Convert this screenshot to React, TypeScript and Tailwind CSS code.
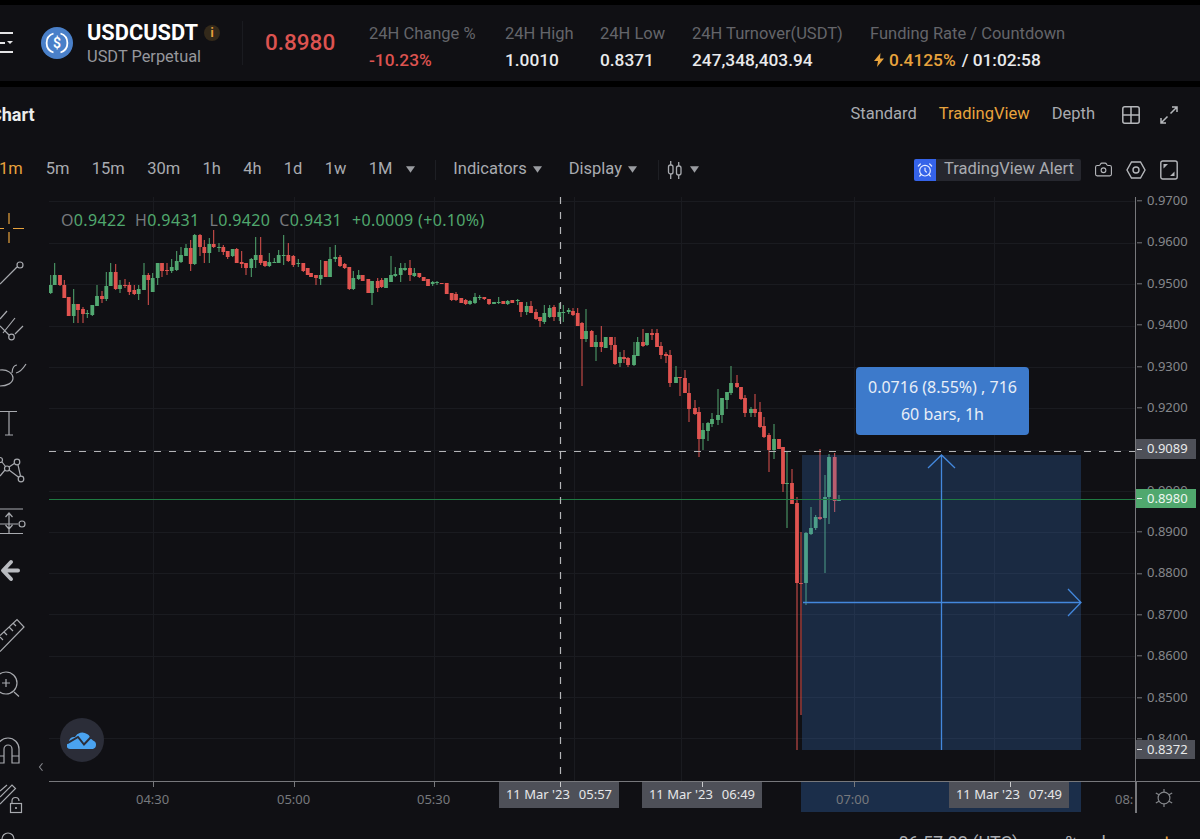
import { AlarmClock, Camera } from "lucide-react";
import type { ReactNode } from "react";

const plex = "font-['Roboto','Noto_Sans',sans-serif]";
const chartFont = "font-['Noto_Sans','Roboto',sans-serif]";

// [x, bodyTop, bodyBottom, wickTop, wickBottom, up] in page pixels
const candles: number[][] = [
  [50.7, 285, 293, 275, 294, 1], [54.7, 275, 285, 263, 285, 1], [60, 275, 285, 275, 286, 0], [64.3, 285, 298, 280, 298, 0],
  [68.7, 297, 316, 297, 316, 0], [73.7, 304, 316, 289, 323, 1], [78, 304, 310, 304, 323, 0], [83, 309, 314, 307, 323, 0],
  [87.3, 313, 314, 310, 318, 1], [92.3, 305, 315, 305, 316, 1], [97, 296, 306, 285, 306, 1], [102, 296, 299, 291, 303, 0],
  [106.3, 286, 299, 272, 301, 1], [110.7, 272, 286, 263, 286, 1], [115.7, 272, 289, 264, 290, 0], [120, 285, 289, 280, 293, 1],
  [125, 285, 286, 279, 288, 0], [129.3, 285, 292, 282, 295, 0], [134.3, 290, 294, 285, 295, 0], [138.7, 289, 294, 285, 300, 1],
  [144, 275, 290, 263, 290, 1], [148.3, 275, 280, 273, 305, 0], [152.7, 278, 292, 273, 292, 1], [157.7, 263, 278, 263, 285, 1],
  [162, 263, 271, 263, 277, 0], [167, 270, 271, 263, 275, 0], [171.7, 267, 271, 259, 273, 1], [176.7, 261, 270, 251, 271, 1],
  [181, 255, 262, 247, 263, 1], [186, 248, 256, 244, 256, 1], [190.7, 248, 264, 240, 271, 0], [194.7, 235, 264, 234, 265, 1],
  [200, 235, 247, 234, 256, 0], [204.3, 247, 253, 240, 263, 0], [209.3, 244, 253, 238, 263, 1], [213.7, 244, 247, 230, 248, 0],
  [219, 247, 248, 243, 252, 1], [223.3, 247, 252, 245, 255, 0], [227.7, 251, 257, 251, 259, 0], [232.7, 249, 256, 249, 257, 1],
  [236.7, 249, 263, 248, 263, 0], [241.7, 262, 264, 251, 268, 0], [246, 263, 268, 263, 275, 0], [251.3, 259, 268, 258, 277, 1],
  [255.7, 255, 260, 237, 268, 1], [260.7, 255, 263, 237, 265, 0], [265, 261, 266, 261, 267, 0], [269.3, 262, 266, 253, 267, 1],
  [274.3, 262, 263, 258, 263, 1], [278.7, 255, 263, 250, 263, 1], [283.7, 255, 256, 235, 265, 1], [288.3, 255, 261, 243, 262, 0],
  [293.3, 256, 265, 255, 267, 0], [298.3, 263, 264, 259, 267, 1], [303.3, 263, 271, 263, 272, 0], [307.7, 268, 275, 268, 275, 0],
  [311, 273, 277, 273, 277, 0], [316, 275, 278, 275, 285, 0], [320.7, 275, 279, 260, 285, 1], [325.7, 261, 277, 261, 277, 0],
  [330, 259, 277, 247, 277, 1], [335.3, 257, 259, 245, 262, 1], [340, 257, 266, 255, 267, 0], [344.7, 264, 268, 263, 269, 0],
  [349.3, 267, 289, 267, 290, 0], [353.3, 278, 289, 271, 290, 1], [358.7, 275, 279, 270, 280, 1], [362.7, 275, 281, 275, 281, 0],
  [368.3, 279, 293, 279, 293, 0], [372, 281, 293, 281, 305, 1], [377.7, 281, 288, 278, 292, 0], [381.7, 280, 287, 278, 288, 0],
  [386, 278, 288, 278, 288, 1], [391, 275, 282, 256, 282, 1], [395.3, 274, 276, 267, 277, 1], [400.7, 268, 275, 263, 282, 1],
  [405, 268, 270, 263, 271, 1], [410, 268, 275, 260, 281, 0], [414.3, 273, 276, 268, 277, 1], [419.3, 273, 277, 273, 278, 0],
  [423.7, 277, 281, 277, 281, 0], [428, 279, 286, 279, 286, 0], [432.7, 282, 284, 281, 286, 1], [437, 282, 283, 281, 285, 1],
  [441.7, 283, 284, 283, 284, 0], [446.7, 283, 294, 283, 294, 0], [451.7, 293, 300, 293, 301, 0], [456, 294, 300, 292, 301, 0],
  [461.3, 298, 303, 298, 303, 0], [465.7, 300, 304, 299, 305, 0], [470, 301, 304, 300, 305, 1], [475, 297, 303, 293, 304, 1],
  [479.7, 297, 298, 295, 300, 1], [484.3, 297, 299, 297, 300, 0], [489, 299, 304, 299, 305, 0], [494, 302, 304, 302, 304, 1],
  [498.7, 302, 303, 297, 304, 1], [503.3, 301, 304, 301, 304, 0], [507.7, 301, 304, 300, 305, 1], [512.3, 300, 303, 300, 303, 0],
  [517.7, 300, 301, 299, 305, 1], [521, 302, 312, 302, 317, 0], [526.7, 306, 312, 302, 315, 1], [531, 306, 313, 301, 313, 0],
  [536, 312, 319, 309, 320, 0], [540, 317, 321, 317, 327, 0], [544.3, 313, 322, 305, 324, 1], [549.7, 308, 317, 305, 318, 1],
  [554, 307, 317, 305, 321, 0], [559.3, 312, 317, 303, 321, 1], [563.3, 312, 313, 305, 322, 1], [568.7, 310, 312, 308, 314, 1],
  [573, 311, 315, 308, 316, 0], [577.7, 313, 326, 308, 326, 0], [582, 323, 339, 322, 386, 0], [586, 331, 339, 309, 342, 1],
  [591.7, 331, 347, 330, 347, 0], [596, 342, 347, 335, 361, 1], [601.3, 342, 347, 326, 352, 0], [605.7, 337, 348, 337, 348, 1],
  [611, 337, 345, 337, 350, 0], [615, 345, 364, 337, 365, 0], [620, 357, 363, 352, 367, 1], [624, 357, 359, 350, 363, 0],
  [628, 358, 365, 357, 367, 0], [634, 355, 365, 342, 366, 1], [637.7, 342, 356, 337, 356, 1], [643, 342, 346, 329, 347, 0],
  [647, 333, 345, 333, 346, 1], [652, 333, 335, 329, 340, 0], [657, 333, 347, 329, 347, 0], [661, 346, 355, 342, 359, 0],
  [666, 354, 356, 352, 363, 0], [670, 355, 383, 350, 387, 0], [676, 377, 383, 366, 383, 1], [680, 377, 378, 377, 396, 0],
  [685, 378, 393, 370, 393, 0], [689, 393, 409, 383, 422, 0], [695, 408, 414, 400, 415, 0], [699, 412, 439, 407, 457, 0],
  [703, 430, 439, 423, 450, 1], [708, 423, 431, 422, 441, 1], [712, 419, 424, 413, 427, 1], [718, 415, 420, 389, 425, 1],
  [722, 398, 415, 398, 423, 1], [727, 392, 400, 392, 409, 1], [731, 383, 393, 366, 395, 1], [737, 383, 387, 375, 388, 0],
  [741, 387, 399, 387, 400, 0], [745, 398, 413, 395, 417, 0], [751, 409, 413, 407, 417, 1], [755, 409, 413, 394, 417, 0],
  [760, 412, 427, 402, 428, 0], [764, 426, 437, 417, 438, 0], [769, 435, 450, 433, 472, 0], [774, 439, 450, 424, 459, 1],
  [779, 439, 449, 439, 449, 0], [783, 447, 484, 447, 492, 0], [787, 483, 484, 452, 528, 1], [792, 483, 504, 469, 504, 0],
  [797, 503, 583, 497, 750, 0], [801, 583, 584, 532, 715, 0], [806, 533, 583, 532, 605, 1], [811, 528, 534, 507, 535, 1],
  [815.7, 517, 528, 515, 530, 1], [820, 517, 519, 449, 520, 0], [825, 497, 518, 475, 573, 1], [829, 457, 497, 454, 524, 1],
  [834.7, 457, 501, 453, 512, 0], [839, 499, 501, 495, 501, 1],
];

const gridY = [201, 243, 284, 326, 367, 408, 450, 491, 532, 573, 614, 656, 697, 738];
const gridX = [153.5, 294.5, 434.5, 574.5, 681.5, 854.5, 994.5];
const priceLabels = ["0.9700", "0.9600", "0.9500", "0.9400", "0.9300", "0.9200", "0.9100", "0.9000", "0.8900", "0.8800", "0.8700", "0.8600", "0.8500", "0.8400"];

function ChartCanvas() {
  return (
    <svg viewBox="49 197 1086 584" className="block w-[1086px] h-[584px]">
      {gridY.map((y) => (
        <line key={y} x1={49} x2={1135} y1={y + 0.5} y2={y + 0.5} stroke="#1a1b20" />
      ))}
      {gridX.map((x) => (
        <line key={x} x1={x} x2={x} y1={197} y2={781} stroke="#1a1b20" />
      ))}
      {candles.map(([x, t, b, wt, wb, up]) => {
        const c = up ? "#52a871" : "#e0534f";
        return (
          <g key={x}>
            <line x1={x} x2={x} y1={wt} y2={wb} stroke={c} strokeWidth={1} />
            <rect x={x - 1.9} y={t} width={3.8} height={Math.max(b - t, 1)} fill={c} />
          </g>
        );
      })}
      <rect x={802} y={455} width={279} height={295} fill="#3c82dc" fillOpacity={0.23} />
      <line x1={49} x2={1135} y1={499.5} y2={499.5} stroke="#1f7a42" strokeWidth={1} />
      <line x1={49} x2={1135} y1={451.5} y2={451.5} stroke="#b4b5b8" strokeWidth={1.2} strokeDasharray="7 8" />
      <line x1={560.5} x2={560.5} y1={197} y2={781} stroke="#b4b5b8" strokeWidth={1.2} strokeDasharray="7 8" />
      <g stroke="#4388dd" strokeWidth={1.3} fill="none">
        <path d="M941.5 750V455M928 468l13.5-13 13.500 13" />
        <path d="M803 602.500H1081M1068 589l13 13.500-13 13.500" />
      </g>
    </svg>
  );
}

function Tool({ y, h, children }: { y: number; h: number; children: ReactNode }) {
  return (
    <svg viewBox={`0 ${y} 49 ${h}`} className="block w-[49px] shrink-0" style={{ height: h }} fill="none" stroke="#a8aaaf" strokeWidth={1.2}>
      {children}
    </svg>
  );
}

function LeftTools() {
  return (
    <div className="relative w-[49px] shrink-0 flex flex-col">
      <Tool y={197} h={53}>
        <path d="M9 213v11M9 232v11M0 228.500h4M13 228.500h11" stroke="#e8a33d" />
      </Tool>
      <Tool y={250} h={50}>
        <path d="M0 284l17-17" />
        <circle cx={20} cy={265} r={3} />
      </Tool>
      <Tool y={300} h={50}>
        <path d="M0 319l7-8M3 333l12-15M15 334l8-8M0 326l9 9" />
        <circle cx={11.500} cy={337} r={2.800} />
      </Tool>
      <Tool y={350} h={50}>
        <path d="M0 370C8 369 13 374 13 378C13 383 7 386 0 386M12 373C12 367 15 365 17 365M16 373Q21 372 26 364" />
      </Tool>
      <Tool y={400} h={46}>
        <path d="M0 411.500h17M9 411.500v23.500M5 435h8" />
      </Tool>
      <Tool y={446} h={50}>
        <circle cx={0} cy={460} r={2.500} />
        <circle cx={7} cy={468.500} r={2.500} />
        <circle cx={17} cy={462} r={2.800} />
        <circle cx={21} cy={479} r={2.800} />
        <path d="M2 462l3.500 4.500M9 470l10 7.500M9 467l6-4M18 465l2.500 11M0 476l5-6" />
      </Tool>
      <Tool y={496} h={50}>
        <path d="M0 509h23M0 533.500h23M9 513v21M5.500 517l3.500-4 3.500 4M5.500 525l3.500 4 3.500-4M0 524h18" />
        <circle cx={22} cy={524} r={3} />
      </Tool>
      <Tool y={546} h={50}>
        <path d="M18 570.500H4M11 562l-8 8.500 8 8.500" stroke="#b9bbc0" strokeWidth={4} strokeLinejoin="round" strokeLinecap="round" />
      </Tool>
      <Tool y={596} h={64}>
        <path d="M0 635.500L17 619.500l7 7.500L0 651.500M4 632l3 3M9 627l4 4M13 623l3 3M0 637l3 3" />
      </Tool>
      <Tool y={660} h={56}>
        <circle cx={6} cy={683} r={11} />
        <path d="M14 692l5 4.500M2 683h8M6 679v8" />
      </Tool>
      <Tool y={716} h={56}>
        <path d="M-3 763V749a11 11 0 0 1 22 0V763H12V749a4 4 0 0 0-8 0V763ZM-3 756H4M12 756H19" />
      </Tool>
      <Tool y={772} h={48}>
        <path d="M0 797L12 785l3.500 3.500L0 804M0 791L7 785" />
        <rect x={10.500} y={803.500} width={11} height={9} />
        <path d="M12 803v-2a3.500 3.500 0 0 1 7 0" />
        <circle cx={16} cy={808} r={0.500} />
      </Tool>
      <Tool y={820} h={19}>
        <circle cx={8} cy={839} r={6} />
      </Tool>
      <svg viewBox="0 0 8 12" className="absolute left-[38px] top-[565px] w-[6px] h-[10px]" fill="none" stroke="#85878c" strokeWidth={1.500}>
        <path d="M6 1L2 6l4 5" />
      </svg>
    </div>
  );
}

function Caret() {
  return (
    <svg viewBox="0 0 10 7" className="block w-[9px] h-[7px]" fill="#9a9ca1">
      <path d="M0 0h10L5 7z" />
    </svg>
  );
}

function Stat({ label, value, className }: { label: string; value: ReactNode; className: string }) {
  return (
    <div className={className}>
      <div className="text-[16.500px] leading-[22px] text-[#64656a] whitespace-nowrap">{label}</div>
      <div className="mt-[4px] text-[17.300px] leading-[22px] font-medium whitespace-nowrap text-[#e9eaec]">{value}</div>
    </div>
  );
}

function Header() {
  return (
    <div className={`${plex} mt-[5px] h-[76px] shrink-0 flex items-center bg-[#101014]`}>
      <div className="w-[41px] shrink-0 flex flex-col gap-[7px] -mt-[1px]">
        <span className="block w-[13px] h-[2px] bg-[#e4e4e6]" />
        <span className="flex w-[13px] items-center gap-[2px]">
          <span className="block w-[6px] h-[2px] bg-[#e4e4e6]" />
          <span className="block w-0 h-0 border-x-[3px] border-x-transparent border-t-[3px] border-t-[#e4e4e6]" />
        </span>
        <span className="block w-[13px] h-[2px] bg-[#e4e4e6]" />
      </div>
      <svg viewBox="0 0 32 32" className="block w-[32px] h-[32px] shrink-0">
        <circle cx={16} cy={16} r={16} fill="#4a80c9" />
        <path d="M12.500 6.500a10 10 0 0 0 0 19M19.500 6.500a10 10 0 0 1 0 19" fill="none" stroke="#fff" strokeWidth={1.800} />
        <text x={16} y={21} fontSize={14} fontWeight={600} fill="#fff" textAnchor="middle" fontFamily="Roboto">$</text>
      </svg>
      <div className="ml-[14px] w-[155px] shrink-0 pt-[2px]">
        <div className="flex items-center h-[26px]">
          <span className="text-[21.800px] font-bold text-white">USDCUSDT</span>
          <span className="ml-[6px] w-[16px] h-[16px] rounded-full bg-[#33291a] flex items-center justify-center text-[12px] font-bold text-[#e8a33d]">i</span>
        </div>
        <div className="text-[16.400px] leading-[22px] text-[#96979c] whitespace-nowrap">USDT Perpetual</div>
      </div>
      <div className="w-px h-[44px] bg-[#1a1b20] shrink-0" />
      <div className="ml-[22px] w-[104px] shrink-0 text-[22.500px] font-medium text-[#dc5350]">0.8980</div>
      <div className="flex pt-[8px]">
        <Stat className="w-[136px] shrink-0" label="24H Change %" value={<span className="text-[#dc5350]">-10.23%</span>} />
        <Stat className="w-[95px] shrink-0" label="24H High" value="1.0010" />
        <Stat className="w-[92px] shrink-0" label="24H Low" value="0.8371" />
        <Stat className="w-[178px] shrink-0" label="24H Turnover(USDT)" value="247,348,403.94" />
        <Stat
          className="shrink-0"
          label="Funding Rate / Countdown"
          value={
            <span className="flex items-center">
              <svg viewBox="0 0 10 14" className="ml-[4px] block w-[10px] h-[14px]" fill="#e8a33d">
                <path d="M6.500 0L0 8h4l-1 6 7-8.500H6z" />
              </svg>
              <span className="ml-[5px] text-[#e8a33d]">0.4125%</span>
              <span className="ml-[6px]">/ 01:02:58</span>
            </span>
          }
        />
      </div>
    </div>
  );
}

function TitleRow() {
  return (
    <div className={`${plex} h-[55px] shrink-0 flex items-center text-[#a9abb0] text-[16.500px]`}>
      <span className="-ml-[10px] text-[18px] font-bold text-[#eceded]">Chart</span>
      <span className="ml-auto">Standard</span>
      <span className="ml-[22px] text-[#e8a33d]">TradingView</span>
      <span className="ml-[22px]">Depth</span>
      <svg viewBox="0 0 18 18" className="ml-[27px] block w-[18px] h-[18px]" fill="none" stroke="#b5b7bb" strokeWidth={1.500}>
        <rect x={0.800} y={0.800} width={16.400} height={16.400} rx={2} />
        <path d="M9 1v16M1 9h16" />
      </svg>
      <svg viewBox="0 0 18 18" className="ml-[20px] mr-[22px] block w-[18px] h-[18px]" fill="none" stroke="#b5b7bb" strokeWidth={1.500}>
        <path d="M10.500 7.500L17 1M12 1h5v5M7.500 10.500L1 17M1 12v5h5" />
      </svg>
    </div>
  );
}

function ToolbarRow() {
  const times = ["5m", "15m", "30m", "1h", "4h", "1d", "1w", "1M"];
  return (
    <div className={`${plex} h-[55px] shrink-0 flex items-center text-[16.500px] text-[#a9abb0]`}>
      <span className="-ml-[1px] text-[#e8a33d]">1m</span>
      <div className="ml-[23px] flex items-center gap-[22.300px]">
        {times.map((t) => (
          <span key={t}>{t}</span>
        ))}
      </div>
      <span className="ml-[14px]">
        <Caret />
      </span>
      <span className="ml-[20px] w-px h-[20px] bg-[#1e1f24]" />
      <span className="ml-[17px]">Indicators</span>
      <span className="ml-[6px]">
        <Caret />
      </span>
      <span className="ml-[27px]">Display</span>
      <span className="ml-[6px]">
        <Caret />
      </span>
      <span className="ml-[21px] w-px h-[20px] bg-[#1e1f24]" />
      <svg viewBox="0 0 16 18" className="ml-[8px] block w-[16px] h-[18px]" fill="none" stroke="#a9abb0" strokeWidth={1.300}>
        <rect x={1.500} y={4} width={4.500} height={9} rx={2} />
        <rect x={9.500} y={5} width={4.500} height={9} rx={2} />
        <path d="M3.700 0v4M3.700 13v5M11.700 1v4M11.700 14v4" />
      </svg>
      <span className="ml-[7px]">
        <Caret />
      </span>
      <div className="ml-auto flex items-center h-[22px] w-[167px] rounded-[2px] bg-[#26272e] overflow-hidden">
        <span className="w-[22px] h-full bg-[#3563e9] flex items-center justify-center">
          <AlarmClock size={16} color="#e6ecff" strokeWidth={1.800} />
        </span>
        <span className="ml-[8px] text-[#a9abb0] whitespace-nowrap">TradingView Alert</span>
      </div>
      <span className="ml-[13px]">
        <Camera size={19} color="#b5b7bb" strokeWidth={1.400} />
      </span>
      <svg viewBox="0 0 20 18" className="ml-[13px] block w-[20px] h-[18px]" fill="none" stroke="#b5b7bb" strokeWidth={1.400}>
        <path d="M5.500 1h9L19 9l-4.500 8h-9L1 9z" />
        <circle cx={10} cy={9} r={3} />
      </svg>
      <svg viewBox="0 0 18 20" className="ml-[14px] mr-[22px] block w-[18px] h-[20px]" fill="none" stroke="#b5b7bb" strokeWidth={1.400}>
        <rect x={0.800} y={1} width={16.400} height={18} rx={2} />
        <path d="M3.500 4h4.500L3.500 8.500zM14.500 16H10l4.500-4.500z" fill="#b5b7bb" stroke="none" />
      </svg>
    </div>
  );
}

function PriceAxis() {
  return (
    <div className={`${chartFont} relative w-[65px] shrink-0 border-l-[1.500px] border-[#77787c] text-[13px] text-[#85878b]`}>
      <div>
        {priceLabels.map((p) => (
          <div key={p} className="flex items-center h-[41.400px] -translate-y-[16.700px]">
            <span className="w-[5px] h-px bg-[#77787c] ml-px" />
            <span className="ml-[5px]">{p}</span>
          </div>
        ))}
      </div>
      <div className="absolute left-0 right-[4px] top-[242px] h-[20px] bg-[#4e5058] flex items-center text-[#e8e9ea]">
        <span className="w-[5px] h-px bg-[#e8e9ea] ml-px" />
        <span className="ml-[5px]">0.9089</span>
      </div>
      <div className="absolute left-0 right-[4px] top-[292px] h-[19px] bg-[#50a86e] flex items-center text-[#eef6f0]">
        <span className="w-[5px] h-px bg-[#eef6f0] ml-px" />
        <span className="ml-[5px]">0.8980</span>
      </div>
      <div className="absolute left-0 right-[5px] top-[543px] h-[19px] bg-[#4e5058] flex items-center text-[#e8e9ea]">
        <span className="w-[5px] h-px bg-[#e8e9ea] ml-px" />
        <span className="ml-[5px]">0.8372</span>
      </div>
    </div>
  );
}

function TimeAxis() {
  const badge = "absolute top-0 h-[26px] w-[120px] bg-[#4e5058] flex items-center justify-center gap-[9px] text-[#e6e7e9] text-[13px]";
  const label = "absolute top-[8px] text-[13px] text-[#77797d]";
  const tick = "absolute top-0 w-px h-[5px]";
  return (
    <div className={`${chartFont} relative h-[31px] shrink-0 border-t-[1.500px] border-[#77787c]`}>
      <div className="absolute left-[752px] w-[280px] top-0 h-[30px] bg-[#1b2e4a]" />
      <span className={`${label} left-[87px]`}>04:30</span>
      <span className={`${label} left-[228px]`}>05:00</span>
      <span className={`${label} left-[368px]`}>05:30</span>
      <span className={`${label} left-[787px]`}>07:00</span>
      <span className={`${label} left-[1066px]`}>08:</span>
      <span className={`${tick} left-[104px] bg-[#77787c]`} />
      <span className={`${tick} left-[245px] bg-[#77787c]`} />
      <span className={`${tick} left-[385px] bg-[#77787c]`} />
      <span className={`${tick} left-[805px] bg-[#77787c]`} />
      <div className={`${badge} left-[450px]`}>
        <span>11 Mar '23</span>
        <span>05:57</span>
      </div>
      <div className={`${badge} left-[593px]`}>
        <span>11 Mar '23</span>
        <span>06:49</span>
      </div>
      <div className={`${badge} left-[900px]`}>
        <span>11 Mar '23</span>
        <span>07:49</span>
      </div>
      <span className={`${tick} left-[511px] bg-[#c9cacc]`} />
      <span className={`${tick} left-[653px] bg-[#c9cacc]`} />
      <span className={`${tick} left-[961px] bg-[#c9cacc]`} />
      <span className="absolute left-[1086px] top-0 w-[1.500px] h-[31px] bg-[#77787c]" />
      <svg viewBox="0 0 22 22" className="absolute left-[1105px] top-[6px] w-[20px] h-[20px]" fill="none" stroke="#85878b" strokeWidth={1.300}>
        <circle cx={11} cy={11} r={6.500} />
        <path d="M11 1v3.500M11 17.500V21M2 5.500l3.500 2M20 5.500l-3.500 2M2 16.500l3.500-2M20 16.500l-3.500-2" />
      </svg>
    </div>
  );
}

export default function App() {
  return (
    <div className="w-[1200px] h-[839px] overflow-hidden bg-black flex flex-col">
      <Header />
      <div className="mt-[6px] flex-1 min-h-0 flex flex-col bg-[#101014]">
        <TitleRow />
        <ToolbarRow />
        <div className="flex flex-1 min-h-0">
          <LeftTools />
          <div className="flex-1 min-w-0 flex flex-col">
            <div className="flex h-[584px] shrink-0">
              <div className="relative w-[1086px] shrink-0">
                <ChartCanvas />
                <div className={`${chartFont} absolute left-[12px] top-[12px] flex text-[16px] leading-[22px] tracking-[0.35px] text-[#50a86e] whitespace-nowrap`}>
                  <span><span className="text-[#77797d]">O</span>0.9422</span>
                  <span className="ml-[9px]"><span className="text-[#77797d]">H</span>0.9431</span>
                  <span className="ml-[10px]"><span className="text-[#77797d]">L</span>0.9420</span>
                  <span className="ml-[9px]"><span className="text-[#77797d]">C</span>0.9431</span>
                  <span className="ml-[10px]">+0.0009 (+0.10%)</span>
                </div>
                <div className={`${chartFont} absolute left-[807px] top-[170px] w-[173px] h-[68px] rounded-[4px] bg-[#3d7acb] flex flex-col items-center justify-center text-[16px] leading-[27px] text-[#e8eef7]`}>
                  <span>0.0716 (8.55%) , 716</span>
                  <span>60 bars, 1h</span>
                </div>
                <div className="absolute left-[11px] top-[521px] w-[44px] h-[44px] rounded-full bg-[#2b2d38] flex items-center justify-center">
                  <svg viewBox="0 0 30 18" className="block w-[30px] h-[18px]">
                    <path d="M3 18a3.500 3.500 0 0 1-1-6.800A5 5 0 0 1 8 6 8 8 0 0 1 20 3a5 5 0 0 1 3 4.500 5 5 0 0 1 3 2 4.500 4.500 0 0 1 0 8.500z" fill="#4aa3f0" />
                    <path d="M0 12.500L11 6l6 7.500L25 5" fill="none" stroke="#2b2d38" strokeWidth={2} />
                  </svg>
                </div>
              </div>
              <PriceAxis />
            </div>
            <TimeAxis />
            <div className={`${plex} flex justify-end items-start pt-[17px] pr-[20px] text-[18px] text-[#a9abb0] whitespace-nowrap`}>
              <span className="mr-[47px]">06:57:02 (UTC)</span>
              <span className="mr-[23px]">%</span>
              <span className="mr-[18px]">log</span>
              <span className="text-[#e8a33d]">auto</span>
            </div>
          </div>
        </div>
      </div>
    </div>
  );
}
